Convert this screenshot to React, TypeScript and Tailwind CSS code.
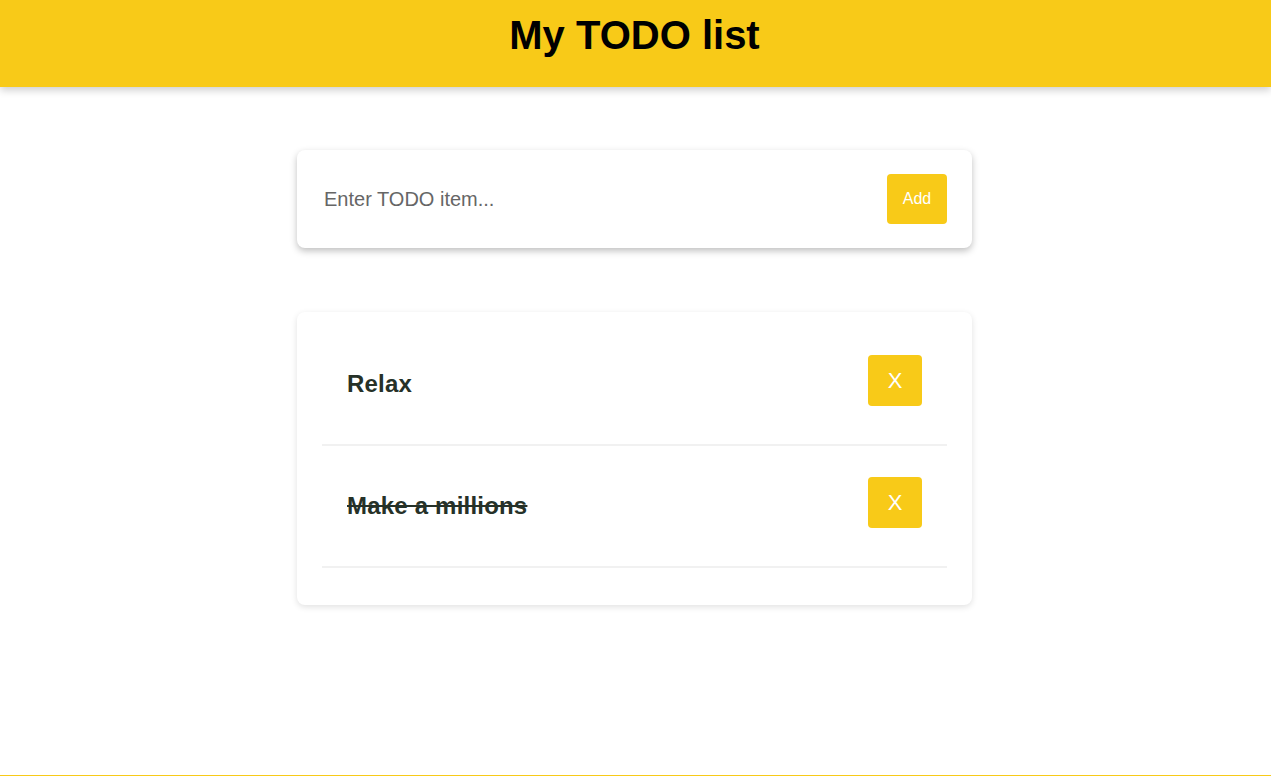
import React, { useState } from 'react';

interface Todo {
  id: number;
  text: string;
  done: boolean;
}

const App: React.FC = () => {
  const [value, setValue] = useState('');
  const [todos, setTodos] = useState<Todo[]>([
    { id: 1, text: 'Relax', done: false },
    { id: 2, text: 'Make a millions', done: true },
  ]);

  const addTodo = () => {
    if (!value.trim()) return;
    setTodos([...todos, { id: Date.now(), text: value.trim(), done: false }]);
    setValue('');
  };

  const toggle = (id: number) => {
    setTodos(todos.map((t) => (t.id === id ? { ...t, done: !t.done } : t)));
  };

  const remove = (id: number) => {
    setTodos(todos.filter((t) => t.id !== id));
  };

  return (
    <div className="bg-white font-['Liberation_Sans',Arial,sans-serif]">
      {/* Header */}
      <header className="relative z-10 h-[87px] bg-[#f8ca18] shadow-[0_3px_8px_rgba(0,0,0,0.2)]">
        <h1 className="pr-[2px] pt-[12px] text-center text-[40px] font-bold leading-[46px] text-black">My TODO list</h1>
      </header>

      {/* Main */}
      <main className="flex min-h-[688px] flex-col items-center pr-[2px]">
        {/* Input card */}
        <div className="mt-[63px] flex h-[98px] w-[675px] items-center justify-between rounded-lg bg-white pl-[27px] pr-[25px] shadow-[0_3px_7px_rgba(0,0,0,0.25)]">
          <input
            type="text"
            value={value}
            onChange={(e) => setValue(e.target.value)}
            onKeyDown={(e) => e.key === 'Enter' && addTodo()}
            placeholder="Enter TODO item..."
            className="flex-1 bg-transparent text-[20px] text-[#333] outline-none placeholder:text-[#666]"
          />
          <button
            onClick={addTodo}
            className="h-[50px] w-[60px] rounded bg-[#f8ca18] text-[16px] text-white"
          >
            Add
          </button>
        </div>

        {/* List card */}
        <div className="mb-10 mt-[64px] w-[675px] rounded-lg bg-white px-[25px] pb-[37px] pt-[12px] shadow-[0_2px_6px_rgba(0,0,0,0.12)]">
          <ul>
            {todos.map((t) => (
              <li
                key={t.id}
                className="flex h-[122px] items-center justify-between border-b-2 border-[#f1f1f1] px-[25px]"
              >
                <span
                  onClick={() => toggle(t.id)}
                  className={`cursor-pointer text-[24px] font-bold tracking-[0.2px] text-[#263128] ${t.done ? 'line-through' : ''}`}
                >
                  {t.text}
                </span>
                <button
                  onClick={() => remove(t.id)}
                  className="mb-[7px] h-[51px] w-[54px] rounded bg-[#f8ca18] text-[22px] text-white"
                >
                  X
                </button>
              </li>
            ))}
          </ul>
        </div>
      </main>

      {/* Footer */}
      <footer className="h-[60px] bg-[#f8ca18]" />
    </div>
  );
};

export default App;
